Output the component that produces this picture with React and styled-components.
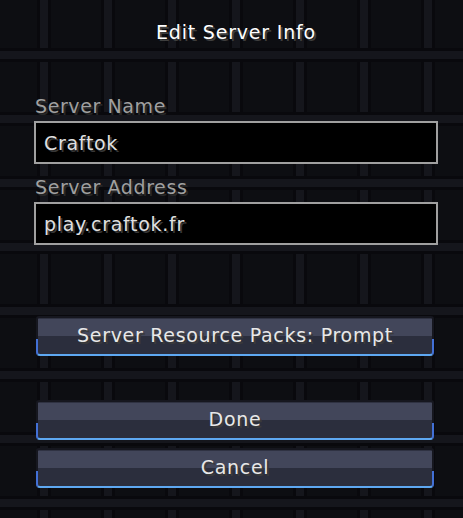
import styled, { createGlobalStyle } from 'styled-components'

const GlobalStyle = createGlobalStyle`
    html, body {
        margin: 0;
        padding: 0;
        background-color: #0d0e12;
        background-image:
            linear-gradient(180deg, #15161c 0 8px, #09090d 8px 11px, transparent 11px 61px, #09090d 61px 64px),
            linear-gradient(90deg, #15161c 0 8px, #09090d 8px 11px, transparent 11px 61px, #09090d 61px 64px);
        background-size: 64px 64px;
        background-position: 40px 51px;
        min-height: 518px;
    }
    * {
        box-sizing: border-box;
    }
`

const StyledScreen = styled.div`
    font-family: "DejaVu Sans", "Noto Sans", sans-serif;
    font-size: 19px;
    line-height: 20px;
    width: 404px;
    margin-left: 34px;
    padding-top: 22px;
    display: flex;
    flex-direction: column;
`

const Title = styled.h1`
    margin: 0;
    font-size: 19px;
    font-weight: normal;
    line-height: 20px;
    letter-spacing: 0.8px;
    text-align: center;
    color: #fff;
    text-shadow: 2px 2px 0 #3e3e3e;
`

const FieldGroup = styled.div`
    display: flex;
    flex-direction: column;
    gap: 5px;
    margin-top: ${p => p.$top}px;
`

const Label = styled.label`
    padding-left: 1px;
    letter-spacing: 0.6px;
    color: #a0a0a0;
    text-shadow: 2px 2px 0 #282828;
`

const TextField = styled.input`
    width: 404px;
    height: 43px;
    padding: 0 8px;
    border: 2px solid #a0a0a0;
    background: #000;
    color: #e0e0e0;
    font: inherit;
    letter-spacing: 0.7px;
    text-shadow: 2px 2px 0 #383838;
    outline: none;
`

const Button = styled.button`
    position: relative;
    width: 398px;
    height: 40px;
    margin-left: 2px;
    margin-top: ${p => p.$top}px;
    border: 2px solid #16171f;
    border-radius: 3px;
    background: linear-gradient(180deg, #2f3242 0 1px, #42465a 1px 50%, #2b2e3d 50% 100%);
    color: #e8e8e8;
    font: inherit;
    letter-spacing: 0.7px;
    text-shadow: 2px 2px 0 #3a3a3a;
    display: flex;
    align-items: center;
    justify-content: center;
    padding: 0 0 3px;

    &::after {
        content: '';
        position: absolute;
        left: -2px;
        right: -2px;
        bottom: -2px;
        height: 15px;
        border: 2px solid #4270d6;
        border-top: none;
        border-bottom-color: #5ea8f2;
        border-radius: 0 0 4px 4px;
    }
`

const App = () => {
    return (
        <>
            <GlobalStyle/>
            <StyledScreen>
                <Title>Edit Server Info</Title>

                <FieldGroup $top={54}>
                    <Label>Server Name</Label>
                    <TextField defaultValue="Craftok"/>
                </FieldGroup>

                <FieldGroup $top={13}>
                    <Label>Server Address</Label>
                    <TextField defaultValue="play.craftok.fr"/>
                </FieldGroup>

                <Button $top={71}>Server Resource Packs: Prompt</Button>
                <Button $top={44}>Done</Button>
                <Button $top={8}>Cancel</Button>
            </StyledScreen>
        </>
    )
}

export default App
